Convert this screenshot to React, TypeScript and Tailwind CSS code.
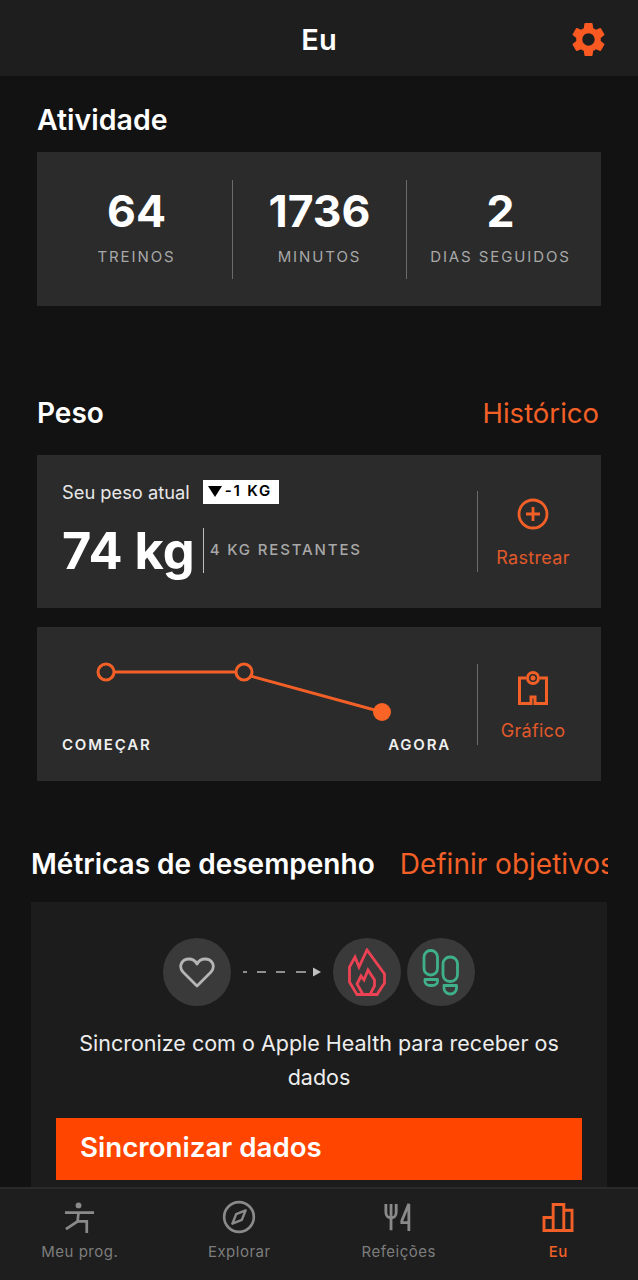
import { MdSettings } from "react-icons/md"

const orange = "#f26027"

function Stat({ value, label }: { value: string; label: string }) {
  return (
    <div className="flex flex-col items-center mb-[8px]">
      <div className="text-[44.500px] leading-[54px] font-bold text-white">{value}</div>
      <div className="mt-[9px] text-[15px] leading-[20px] tracking-[1.900px] text-[#a8a8a8] whitespace-nowrap">{label}</div>
    </div>
  )
}

function YogaIcon() {
  return (
    <svg width="31" height="31" viewBox="0 0 32 32" fill="none" stroke="#8a8a8a" strokeWidth="2.800">
      <circle cx="15" cy="3.500" r="3" fill="#8a8a8a" stroke="none" />
      <path d="M1 11h30M15 11l-1 9L2 28M14 20h9.500v12" />
    </svg>
  )
}

function CompassIcon() {
  return (
    <svg width="34" height="34" viewBox="0 0 36 36" fill="none" stroke="#8a8a8a">
      <circle cx="18" cy="18" r="15.700" strokeWidth="2.800" />
      <path d="M25 11 L21 21 L11 25 L15 15 Z" strokeWidth="2.600" strokeLinejoin="round" />
    </svg>
  )
}

function CutleryIcon() {
  return (
    <svg width="30" height="30" viewBox="0 0 32 32" fill="none" stroke="#8a8a8a" strokeWidth="3">
      <path d="M2 2v9c0 4 2.500 6 5.500 6s5.500-2 5.500-6V2M7.500 2v28" />
      <path d="M26.500 31V2L19 20v2h7.500" />
    </svg>
  )
}

function BarsIcon() {
  return (
    <svg width="32" height="29" viewBox="0 0 32 30" fill="none" stroke={orange} strokeWidth="3">
      <path d="M1.500 28.500V15h9.500v13.500zM11 28.500V1.500h11v27zM22 28.500V7.500h8.500v21z" />
    </svg>
  )
}

function Tab({ label, active, children }: { label: string; active?: boolean; children: React.ReactNode }) {
  return (
    <div className="flex flex-col items-center w-[160px]">
      <div className="h-[36px] flex items-center justify-center">{children}</div>
      <div className={`mt-[7px] text-[15px] leading-[20px] tracking-[0.500px] ${active ? "text-[#f26027] font-medium" : "text-[#7d7d7d]"}`}>{label}</div>
    </div>
  )
}

export default function App() {
  return (
    <div className="h-[1280px] w-[638px] flex flex-col overflow-hidden bg-[#121212] text-white" style={{ fontFamily: "Inter, sans-serif" }}>
      <header className="relative h-[76px] shrink-0 bg-[#1e1e1e] flex items-center justify-center pt-[4px]">
        <div className="text-[29px] font-semibold">Eu</div>
        <MdSettings className="absolute right-[29px] top-[19px]" size={41} color="#fa5a22" />
      </header>

      <main className="flex-1 overflow-hidden px-[37px]">
        <h2 className="mt-[26px] text-[28.500px] leading-[36px] font-semibold">Atividade</h2>

        <section className="mt-[14px] h-[154px] bg-[#2b2b2b] flex items-center">
          <div className="w-[195px] pl-[4px] flex justify-center"><Stat value="64" label="TREINOS" /></div>
          <div className="w-px h-[99px] bg-[#6b6b6b]" />
          <div className="w-[173px] flex justify-center"><Stat value="1736" label="MINUTOS" /></div>
          <div className="w-px h-[99px] bg-[#6b6b6b]" />
          <div className="flex-1 pr-[7px] flex justify-center"><Stat value="2" label="DIAS SEGUIDOS" /></div>
        </section>

        <div className="mt-[89px] flex items-center justify-between">
          <h2 className="text-[28px] leading-[36px] font-semibold">Peso</h2>
          <span className="text-[27.500px] leading-[36px] text-[#f26027] mr-[2px]">Histórico</span>
        </div>

        <section className="mt-[24px] h-[153px] bg-[#2b2b2b] flex items-center pl-[25px]">
          <div className="w-[415px] mb-[3px]">
            <div className="flex items-center gap-[13px]">
              <span className="text-[18.300px] leading-[24px] text-[#e8e8e8]">Seu peso atual</span>
              <span className="h-[24px] pl-[5px] pr-[7px] bg-white text-black text-[15px] font-semibold tracking-[1.800px] flex items-center gap-[3px]">
                <svg width="14" height="11" viewBox="0 0 14 11"><path d="M0 0h14L7 11z" fill="#000" /></svg>
                -1 KG
              </span>
            </div>
            <div className="mt-[17px] flex items-center">
              <span className="text-[50.500px] leading-[60px] font-bold">74 kg</span>
              <div className="w-px h-[45px] bg-[#bdbdbd] ml-[8px]" />
              <span className="ml-[6px] text-[15px] font-medium tracking-[1.850px] text-[#a8a8a8]">4 KG RESTANTES</span>
            </div>
          </div>
          <div className="w-px h-[81px] bg-[#6b6b6b]" />
          <div className="flex-1 pr-[13px] pt-[5px] flex flex-col items-center">
            <svg width="32" height="32" viewBox="0 0 32 32" fill="none" stroke={orange} strokeWidth="2.800">
              <circle cx="16" cy="16" r="14" />
              <path d="M16 9v14M9 16h14" />
            </svg>
            <span className="mt-[16px] text-[18px] leading-[24px] tracking-[0.300px] text-[#e0592a]">Rastrear</span>
          </div>
        </section>

        <section className="mt-[19px] h-[154px] bg-[#2b2b2b] flex items-center pl-[25px]">
          <div className="w-[415px] h-full relative">
            <svg className="absolute left-[30px] top-[30px]" width="340" height="70" viewBox="0 0 340 70" fill="none" stroke={orange} strokeWidth="3">
              <path d="M22 15H144L290 55" />
              <circle cx="14" cy="15" r="8" fill="#2b2b2b" />
              <circle cx="152" cy="15" r="8" fill="#2b2b2b" />
              <circle cx="290" cy="55" r="9" fill="#fa6426" stroke="none" />
            </svg>
            <div className="pt-[108px] pr-[26px] flex justify-between text-[15px] leading-[20px] font-semibold tracking-[1.800px] text-[#efefef]">
              <span>COMEÇAR</span>
              <span>AGORA</span>
            </div>
          </div>
          <div className="w-px h-[81px] bg-[#6b6b6b]" />
          <div className="flex-1 pr-[13px] pt-[6px] flex flex-col items-center">
            <svg width="30" height="34" viewBox="0 0 30 34" fill="none" stroke={orange} strokeWidth="3">
              <path d="M8 7H1.500v25.500H13V26h4v6.500h11.500V7H22" />
              <circle cx="15" cy="7" r="5.500" />
              <circle cx="15" cy="7" r="2.500" fill={orange} stroke="none" />
            </svg>
            <span className="mt-[14px] text-[18px] leading-[24px] tracking-[0.300px] text-[#e0592a]">Gráfico</span>
          </div>
        </section>

        <div className="-mx-[6px] w-[577px] mt-[65px] flex items-center gap-[25px] overflow-hidden whitespace-nowrap">
          <h2 className="text-[28px] leading-[36px] font-semibold shrink-0">Métricas de desempenho</h2>
          <span className="text-[28px] leading-[36px] text-[#f26027] shrink-0">Definir objetivos</span>
        </div>

        <section className="-mx-[6px] mt-[20px] h-[290px] bg-[#1c1c1c] px-[25px] pt-[36px] flex flex-col items-center">
          <div className="flex items-center">
            <div className="w-[68px] h-[68px] rounded-full bg-[#3a3a3a] flex items-center justify-center">
              <svg width="36" height="32" viewBox="0 0 36 32" fill="none" stroke="#b5b5b5" strokeWidth="2.800" strokeLinejoin="round">
                <path d="M18 30 L4 16C-1 10 3 3 10 3c3.500 0 6.500 2 8 5 1.500-3 4.500-5 8-5 7 0 11 7 6 13z" />
              </svg>
            </div>
            <svg className="ml-[11px] mr-[11px]" width="80" height="10" viewBox="0 0 80 10">
              <path d="M1 5h4M15 5h9M34 5h9M54 5h10" stroke="#b5b5b5" strokeWidth="1.500" />
              <path d="M71 0.500L79 5L71 9.500z" fill="#c0c0c0" />
            </svg>
            <div className="w-[68px] h-[68px] rounded-full bg-[#3a3a3a] flex items-center justify-center">
              <svg width="38" height="48" viewBox="0 0 38 48" fill="none" stroke="#ec4254" strokeWidth="2.800" strokeLinejoin="miter">
                <path d="M9 46.500L1.500 34V19L7 9l4 10 8-17 17.500 24v9L29 46.500z" />
                <path d="M15 46.500L9 36l4-8 3 4 4-10 6.500 10v6l-4.500 8.500" />
              </svg>
            </div>
            <div className="ml-[6px] w-[68px] h-[68px] rounded-full bg-[#3a3a3a] flex items-center justify-center">
              <svg width="38" height="47" viewBox="0 0 38 47" fill="none" stroke="#3fb08a" strokeWidth="2.800" strokeLinejoin="round">
                <rect x="2" y="1.500" width="13.500" height="24.500" rx="6.500" />
                <path d="M3 30.500h12.500v2c0 2.500-3 4-6.200 4S3 35 3 32.500z" />
                <rect x="21" y="8" width="14.500" height="24.500" rx="7" />
                <path d="M22 36.500h12.500v3c0 3-3 5.500-6.200 5.500S22 42.500 22 39.500z" />
              </svg>
            </div>
          </div>
          <p className="mt-[20px] w-[500px] text-center text-[21.500px] leading-[34px] text-[#ededed]">
            Sincronize com o Apple Health para receber os dados
          </p>
          <button className="mt-[24px] w-full h-[62px] shrink-0 bg-[#ff4500] text-left pl-[24px] pb-[3px] text-[27.700px] font-semibold">
            Sincronizar dados
          </button>
        </section>
      </main>

      <nav className="h-[93px] shrink-0 bg-[#1e1e1e] border-t-2 border-[#2a2a2a] flex pt-[10px]">
        <Tab label="Meu prog."><YogaIcon /></Tab>
        <Tab label="Explorar"><CompassIcon /></Tab>
        <Tab label="Refeições"><CutleryIcon /></Tab>
        <Tab label="Eu" active><BarsIcon /></Tab>
      </nav>
    </div>
  )
}
